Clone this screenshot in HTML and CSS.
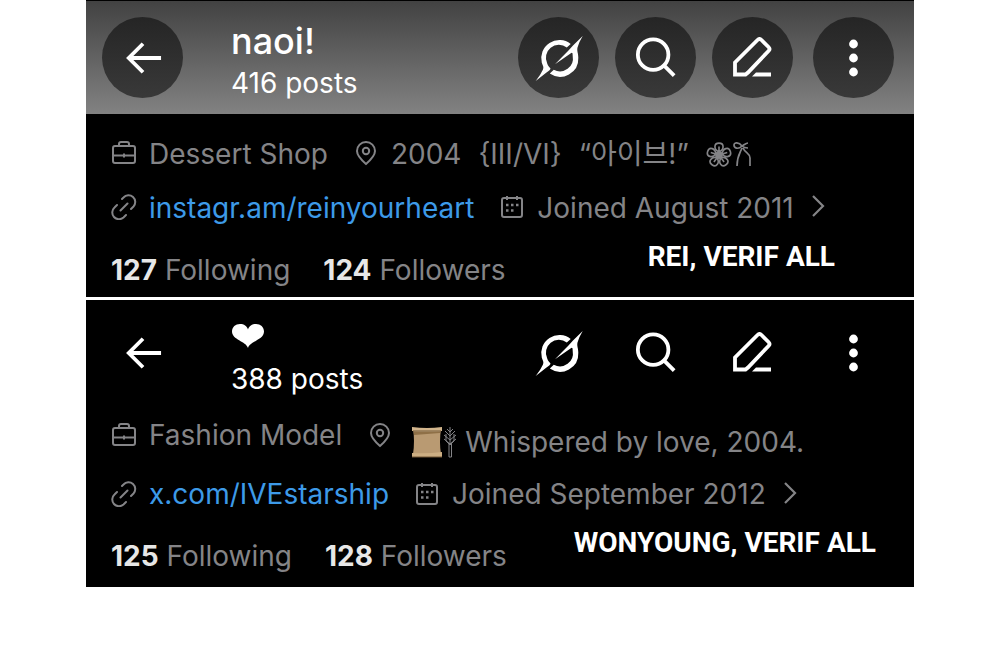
FILE: index.html
```html
<!DOCTYPE html>
<html lang="en">
<head>
<meta charset="utf-8">
<meta name="viewport" content="width=device-width, initial-scale=1">
<title>Profiles</title>
<link rel="stylesheet" href="styles.css">
</head>
<body>
<svg class="defs" aria-hidden="true">
  <symbol id="back" viewBox="0 0 40 40"><path d="M39 20H5M20 5 5 20l15 15" fill="none" stroke="currentColor" stroke-width="4"/></symbol>
  <symbol id="slash" viewBox="0 0 50 50">
    <path d="M36.700 10.900A18.200 18.200 0 0 0 7.800 29.700C8.800 32.500 10 34 9 36.500Q6.500 42 1.700 48L12.500 39.500Q16.500 37 16.500 35.500C15.500 34 14 33 13.200 30.500A13 13 0 0 1 32.800 14.500Z" fill="currentColor"/>
    <path d="M48.700 3 39 12.500 34 18Q28 24 21 31.300L36.500 20.500C38.500 19 38.600 20 38.700 23A13 13 0 0 1 19.800 36.800L15.800 40.500A18.200 18.200 0 0 0 44.300 24.700C44.300 20 42.700 18 43.500 14.500Q45 9 48.700 3Z" fill="currentColor"/>
  </symbol>
  <symbol id="search" viewBox="0 0 44 44"><g fill="none" stroke="currentColor" stroke-width="4"><circle cx="19" cy="18.500" r="16"/><path d="m30 29.500 11 11"/></g></symbol>
  <symbol id="edit" viewBox="0 0 42 42"><path d="M3 37.500V25.500L25.500 3q2-2 4 0l7 7q2 2 0 4L16 35.500l-2.500 2Z" fill="none" stroke="currentColor" stroke-width="3.800"/><path d="m20 39.400 4-4H39v4Z" fill="currentColor"/></symbol>
  <symbol id="more" viewBox="0 0 12 40"><g fill="currentColor"><circle cx="5.500" cy="6" r="4.400"/><circle cx="5.500" cy="20" r="4.400"/><circle cx="5.500" cy="34" r="4.400"/></g></symbol>
  <symbol id="job" viewBox="0 0 26 26"><g fill="none" stroke="currentColor" stroke-width="2"><rect x="2" y="6" width="22" height="17" rx="2"/><path d="M8 6V4q0-2 2-2h6q2 0 2 2v2M2 15.500h22M13 13.500v4"/></g></symbol>
  <symbol id="pin" viewBox="0 0 22 26"><g fill="none" stroke="currentColor" stroke-width="2"><path d="M11 24C7 20.500 2 16 2 11a9 9 0 0 1 18 0c0 5-5 9.500-9 13Z"/><circle cx="11" cy="11" r="3.200"/></g></symbol>
  <symbol id="link" viewBox="0 0 26 26"><g fill="none" stroke="currentColor" stroke-width="2" stroke-linecap="round"><path d="m11 5 1.500-1.500a6.700 6.700 0 0 1 10 9L20 15M6 11l-2.500 2.500a6.700 6.700 0 0 0 9 10L15 21M9.500 16.500l7-7"/></g></symbol>
  <symbol id="date" viewBox="0 0 26 26"><rect x="3" y="4" width="20" height="19" rx="2" fill="none" stroke="currentColor" stroke-width="2"/><path d="M8 2v4M18 2v4" stroke="currentColor" stroke-width="2"/><path d="M7 11h2.500M12 11h2.500M17 11h2.500M7 16.500h2.500M12 16.500h2.500" stroke="currentColor" stroke-width="2.500"/></symbol>
  <symbol id="next" viewBox="0 0 14 24"><path d="m2 2 10 10L2 22" fill="none" stroke="currentColor" stroke-width="2.200"/></symbol>
  <symbol id="heart" viewBox="0 0 32 24"><path d="M16 24C14 17 0 16 0 7.500 0 3 3.500 0 8 0c4 0 7 2 8 5.500C17 2 20 0 24 0c4.500 0 8 3 8 7.500C32 16 18 17 16 24Z" fill="currentColor"/></symbol>
  <symbol id="flower" viewBox="0 0 24 24"><g fill="none" stroke="currentColor" stroke-width="1.500"><path id="petal" d="M12 10C7 8 7 2 12 2s5 6 0 8M12 5v4"/><use href="#petal" transform="rotate(72 12 13)"/><use href="#petal" transform="rotate(144 12 13)"/><use href="#petal" transform="rotate(216 12 13)"/><use href="#petal" transform="rotate(288 12 13)"/></g><circle cx="12" cy="13" r="3.600" fill="currentColor"/></symbol>
  <symbol id="ribbon" viewBox="0 0 20 26"><path d="M10 5C7 1 2 1 2 4s4 5 8 1c2-1 4-3 6-3M10 5c2 2 4 2 6 2M10 7C8 12 5 15 5 25M11 7c2 5 7 5 7 10v8" fill="none" stroke="currentColor" stroke-width="1.700"/></symbol>
  <symbol id="scroll" viewBox="0 0 32 32"><path d="M2 3h28q-2 13 0 25H2Q4 15 2 3Z" fill="#b99a72"/><path d="M3 6h26v1L3 9Z" fill="#8f7047"/><path d="M1 1q15 2 30 0v4Q16 6 1 5Z" fill="#d2b58c"/><path d="M1 27q15 1 30-1v5H1Z" fill="#ccae83"/><path d="M1 31h30M2 5h28" stroke="#6f5535"/></symbol>
  <symbol id="wheat" viewBox="0 0 14 32"><path d="M6 31V18h2.500v13ZM7 18V1M7 6 4 3M7 6l3-3M7 10 2 5M7 10l5-5M7 14 1 9M7 14l6-5M7 18 1 13M7 18l6-5M3 8v7l4 4 4-4V8" fill="none" stroke="currentColor" stroke-width="1"/></symbol>
</svg>
<main class="profiles">
  <section class="profile">
    <header class="bar bar-tinted">
      <button class="action" aria-label="Back"><svg class="i38"><use href="#back"/></svg></button>
      <div class="heading"><h1 class="name">naoi!</h1><p class="posts">416 posts</p></div>
      <div class="actions">
        <button class="action" aria-label="Explain"><svg class="i50"><use href="#slash"/></svg></button>
        <button class="action" aria-label="Search"><svg class="i42"><use href="#search"/></svg></button>
        <button class="action" aria-label="Edit"><svg class="i42"><use href="#edit"/></svg></button>
        <button class="action more" aria-label="More"><svg class="dots"><use href="#more"/></svg></button>
      </div>
    </header>
    <div class="details">
      <div class="row">
        <span class="item"><svg class="i26"><use href="#job"/></svg>Dessert Shop</span>
        <span class="item"><svg class="i26"><use href="#pin"/></svg><span class="place"><span>2004</span><span>{III/VI}</span><span>“아이브!”</span><span class="marks"><svg class="i26"><use href="#flower"/></svg><svg class="bow"><use href="#ribbon"/></svg></span></span></span>
      </div>
      <div class="row">
        <span class="item"><svg class="i26"><use href="#link"/></svg><a class="url" href="#reinyourheart">instagr.am/reinyourheart</a></span>
        <a class="item" href="#joined"><svg class="i26"><use href="#date"/></svg>Joined August 2011<svg class="chevron"><use href="#next"/></svg></a>
      </div>
      <div class="foot">
        <div class="stats"><a href="#following"><b>127</b> Following</a><a href="#followers"><b>124</b> Followers</a></div>
        <p class="caption caption-inset">REI, VERIF ALL</p>
      </div>
    </div>
  </section>
  <section class="profile">
    <header class="bar">
      <button class="action" aria-label="Back"><svg class="i38"><use href="#back"/></svg></button>
      <div class="heading"><h1 class="name" aria-label="Heart"><svg class="heart"><use href="#heart"/></svg></h1><p class="posts">388 posts</p></div>
      <div class="actions">
        <button class="action" aria-label="Explain"><svg class="i50"><use href="#slash"/></svg></button>
        <button class="action" aria-label="Search"><svg class="i42"><use href="#search"/></svg></button>
        <button class="action" aria-label="Edit"><svg class="i42"><use href="#edit"/></svg></button>
        <button class="action more" aria-label="More"><svg class="dots"><use href="#more"/></svg></button>
      </div>
    </header>
    <div class="details details-tall">
      <div class="row">
        <span class="item"><svg class="i26"><use href="#job"/></svg>Fashion Model</span>
        <span class="item"><svg class="i26"><use href="#pin"/></svg><span class="place place-low"><span class="marks"><svg class="scroll"><use href="#scroll"/></svg><svg class="wheat"><use href="#wheat"/></svg></span><span>Whispered by love, 2004.</span></span></span>
      </div>
      <div class="row">
        <span class="item"><svg class="i26"><use href="#link"/></svg><a class="url" href="#IVEstarship">x.com/IVEstarship</a></span>
        <a class="item" href="#joined"><svg class="i26"><use href="#date"/></svg>Joined September 2012<svg class="chevron"><use href="#next"/></svg></a>
      </div>
      <div class="foot">
        <div class="stats"><a href="#following"><b>125</b> Following</a><a href="#followers"><b>128</b> Followers</a></div>
        <p class="caption">WONYOUNG, VERIF ALL</p>
      </div>
    </div>
  </section>
</main>
</body>
</html>
```
FILE: styles.css
```css
* { box-sizing: border-box; }
body { margin: 0; background: #fff; font: 28px/32px Inter, "Noto Sans CJK KR", sans-serif; }
h1, p { margin: 0; }
a { color: inherit; text-decoration: none; }
svg { flex: none; display: block; }
.defs { position: absolute; width: 0; height: 0; }
.profiles { display: grid; gap: 3px; margin: 0 8.6%; }
.profile { background: #000; color: #848487; white-space: nowrap; }
.bar { display: flex; align-items: flex-start; padding: 12px 20px 12px 16px; color: #fff; }
.bar-tinted { padding-top: 16px; padding-bottom: 13px; border-top: 1px solid #000; background: linear-gradient(#424242, #828282); }
.action { display: grid; place-items: center; width: 81px; height: 81px; padding: 0; border: 0; border-radius: 50%; background: none; color: #fff; }
.bar-tinted .action { background: linear-gradient(#252525, #393939); }
.heading { margin-left: 48px; }
.name { display: flex; align-items: center; height: 48px; font-size: 36px; line-height: 48px; font-weight: 500; }
.posts { line-height: 38px; }
.bar-tinted .posts { line-height: 36px; }
.actions { display: flex; gap: 16px; margin-left: auto; }
.more { margin-left: 4px; }
.i26 { width: 26px; height: 26px; }
.i38 { width: 38px; height: 38px; }
.i42 { width: 42px; height: 42px; }
.i50 { width: 50px; height: 50px; }
.dots { width: 12px; height: 40px; }
.heart { width: 34px; height: 24px; }
.bow { width: 20px; height: 26px; }
.scroll { width: 32px; height: 32px; }
.wheat { width: 14px; height: 32px; }
.chevron { width: 14px; height: 24px; margin-left: 5px; }
.details { padding: 24px 0 11px 25px; }
.details-tall { padding: 9px 0 15px 25px; }
.row { display: flex; align-items: flex-start; gap: 25px; margin-bottom: 22px; }
.details-tall .row:first-child { margin-bottom: 20px; }
.item { display: flex; align-items: flex-start; gap: 12px; }
.item > svg { margin-top: 2px; }
.details-tall .item > svg { margin-top: 3px; }
.place { display: flex; gap: 17px; }
.place-low { gap: 8px; padding: 7px 0 0 6px; }
.marks { display: flex; align-items: center; }
.url { color: #3d9ae8; }
.foot { display: flex; justify-content: space-between; align-items: flex-start; margin-top: -5px; }
.stats { display: flex; gap: 33px; padding-top: 13px; }
.stats b { color: #e7e7e7; font-weight: 700; }
.caption { padding-right: 38px; font: 700 28px/32px Roboto, sans-serif; color: #fff; }
.caption-inset { padding-right: 79px; }
```
